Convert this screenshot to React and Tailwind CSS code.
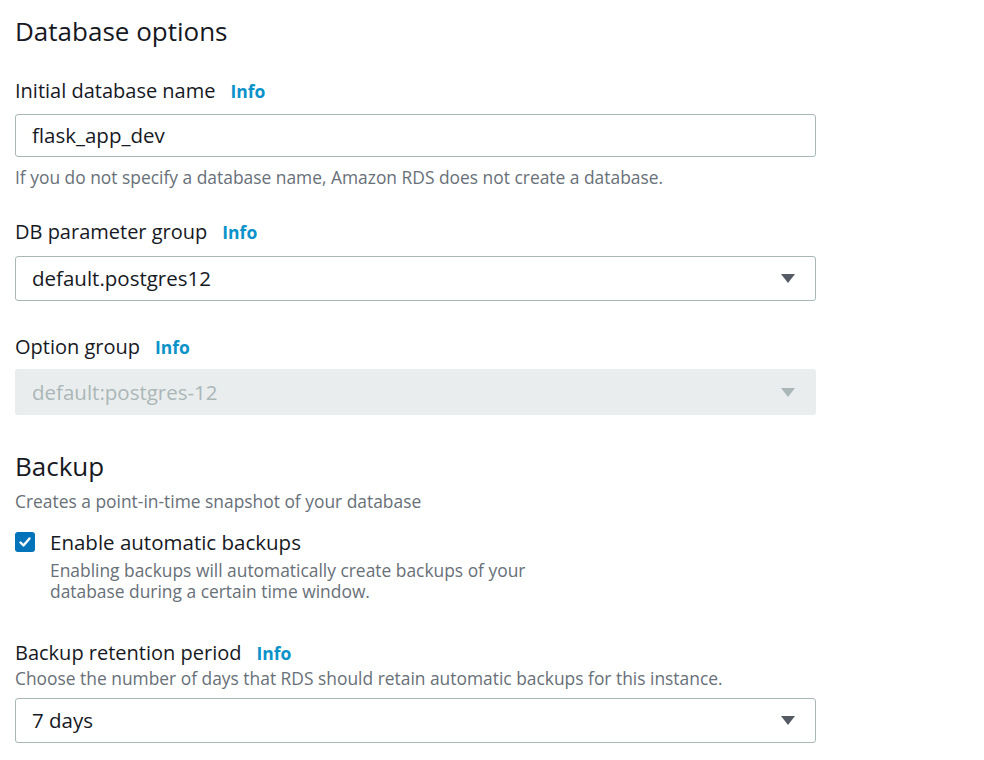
const FONT = { fontFamily: '"Open Sans", "Noto Sans", sans-serif' };

function Label({ text }) {
  return (
    <div className="flex items-baseline gap-[15px] text-[20px] leading-[24px] text-[#16191f]">
      <span>{text}</span>
      <span className="text-[17.5px] font-bold text-[#0a92c9]">Info</span>
    </div>
  );
}

function Arrow({ color }) {
  return (
    <svg width="16" height="11" viewBox="0 0 16 11" className="shrink-0">
      <path d="M1 1h14L8 10z" fill={color} />
    </svg>
  );
}

function Select({ value, disabled }) {
  return (
    <div
      className={
        disabled
          ? "flex h-[46px] w-[801px] items-center justify-between rounded-[3px] bg-[#eaeded] pl-[17px] pr-[20px] text-[20.5px] text-[#aab7b8]"
          : "flex h-[45px] w-[801px] items-center justify-between rounded-[3px] border border-[#aab7b8] bg-white pl-[16px] pr-[19px] text-[20.5px] text-[#16191f]"
      }
    >
      <span>{value}</span>
      <Arrow color={disabled ? "#aab7b8" : "#545b64"} />
    </div>
  );
}

export default function App() {
  return (
    <div className="min-h-[760px] w-[984px] bg-white pl-[15px] pt-[14px]" style={FONT}>
      <h2 className="text-[26px] leading-[34px] text-[#16191f]">Database options</h2>

      <div className="mt-[31px]">
        <Label text="Initial database name" />
        <div className="mt-[11px] flex h-[43px] w-[801px] items-center rounded-[3px] border border-[#aab7b8] pl-[16px] text-[20.5px] text-[#16191f]">
          flask_app_dev
        </div>
        <p className="mt-[10px] text-[17.4px] leading-[20px] text-[#687078]">
          If you do not specify a database name, Amazon RDS does not create a database.
        </p>
      </div>

      <div className="mt-[33px]">
        <Label text="DB parameter group" />
        <div className="mt-[12px]">
          <Select value="default.postgres12" />
        </div>
      </div>

      <div className="mt-[34px]">
        <Label text="Option group" />
        <div className="mt-[10px]">
          <Select value="default:postgres-12" disabled />
        </div>
      </div>

      <h2 className="mt-[34px] text-[26px] leading-[34px] text-[#16191f]">Backup</h2>
      <p className="mt-[8px] text-[17.4px] leading-[20px] text-[#687078]">
        Creates a point-in-time snapshot of your database
      </p>

      <div className="mt-[19px] flex gap-[15px]">
        <div className="mt-[2px] flex h-[20px] w-[20px] shrink-0 items-center justify-center rounded-[3px] bg-[#0073bb]">
          <svg width="14" height="14" viewBox="0 0 14 14">
            <path d="M2.5 7.5l3 3 6-7" fill="none" stroke="white" strokeWidth="2.4" strokeLinecap="round" strokeLinejoin="round" />
          </svg>
        </div>
        <div>
          <div className="text-[20.5px] leading-[24px] text-[#16191f]">Enable automatic backups</div>
          <p className="mt-[6px] w-[500px] text-[17.4px] leading-[21px] text-[#687078]">
            Enabling backups will automatically create backups of your database during a certain time window.
          </p>
        </div>
      </div>

      <div className="mt-[39px]">
        <Label text="Backup retention period" />
        <p className="mt-[3px] text-[17.4px] leading-[20px] text-[#687078]">
          Choose the number of days that RDS should retain automatic backups for this instance.
        </p>
        <div className="mt-[10px]">
          <Select value="7 days" />
        </div>
      </div>
    </div>
  );
}
